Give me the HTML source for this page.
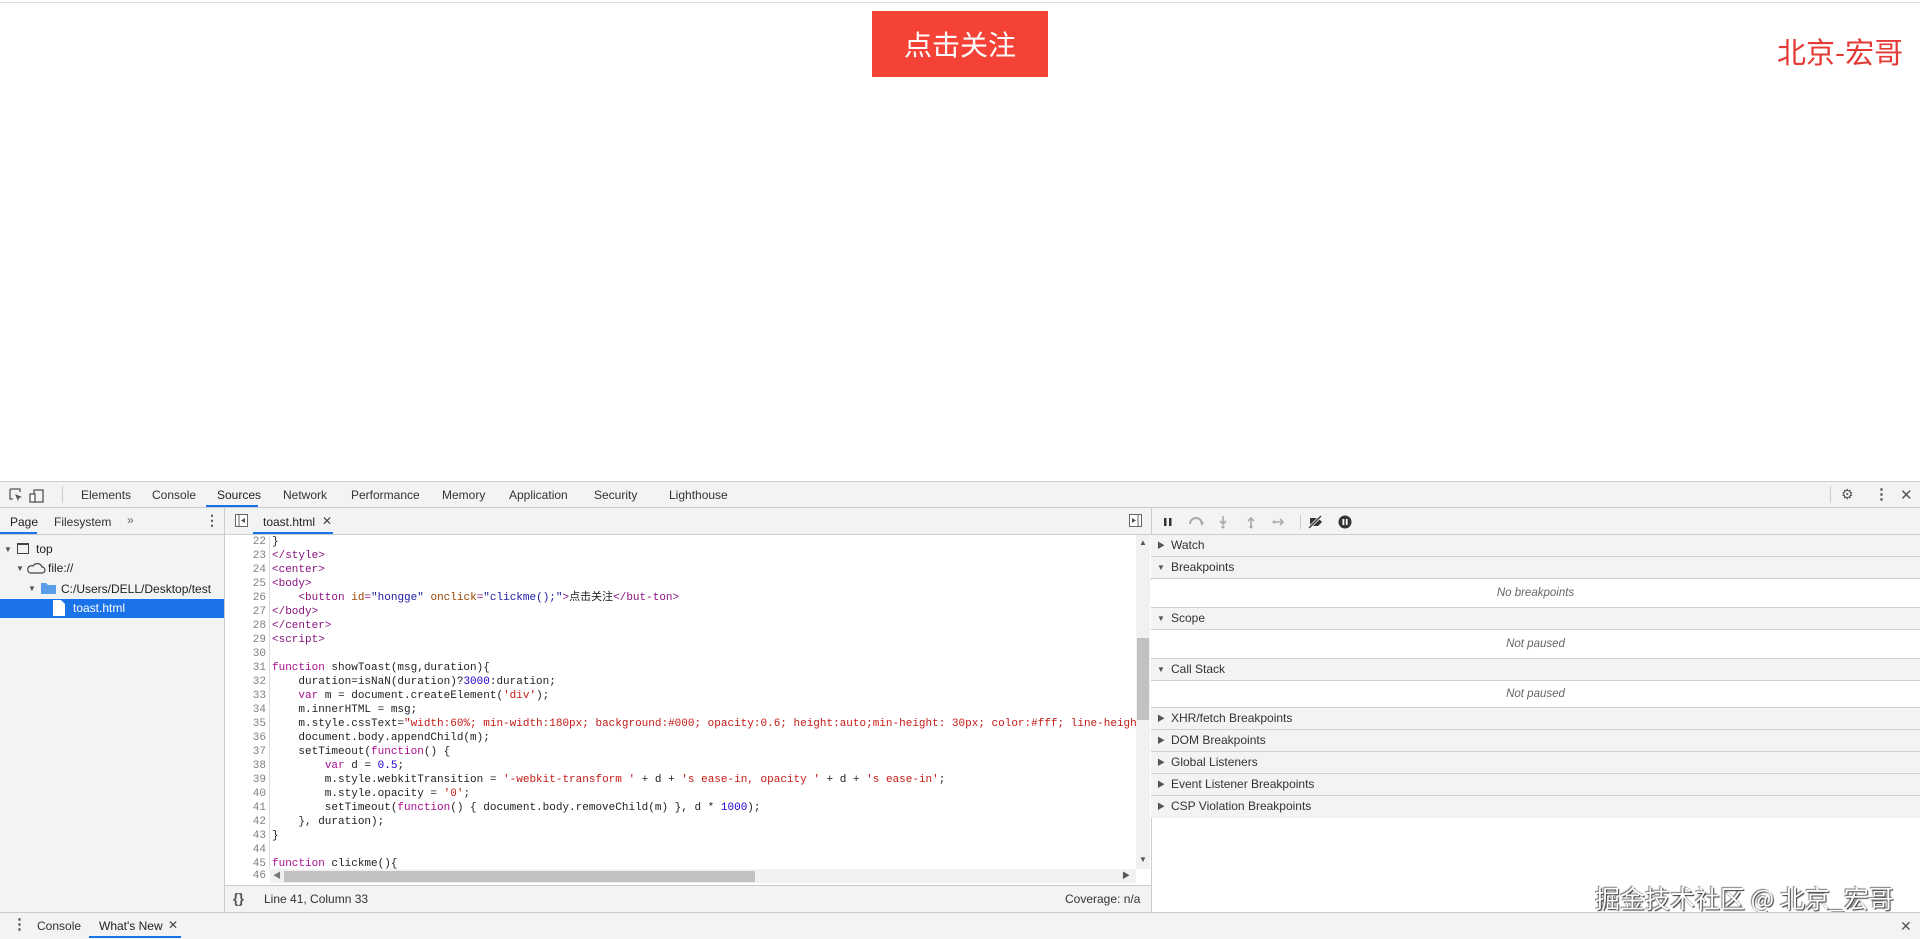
<!DOCTYPE html>
<html><head><meta charset="utf-8">
<style>
*{margin:0;padding:0;box-sizing:border-box}
body{width:1920px;height:939px;overflow:hidden;background:#fff;font-family:"Liberation Sans","Noto Sans CJK SC",sans-serif;position:relative;color:#333}
.a{position:absolute;white-space:nowrap}
.ui{font-size:12px;color:#333}
.mono{font-family:"Liberation Mono","Noto Sans CJK SC",monospace;font-size:11px}
.ln{position:absolute;left:224px;width:42px;text-align:right;color:#808080}
.cl{position:absolute;left:272px;color:#222;white-space:pre}
.k{color:#aa0d91}.t{color:#881280}.at{color:#994500}.av{color:#1a1aa6}.s{color:#c41a16}.n{color:#1c00cf}
.hdr{position:absolute;left:1151px;width:769px;height:22px;background:#f3f3f3;border-bottom:1px solid #d0d0d0;font-size:12px;color:#333;padding-left:20px;line-height:21px}
.tri{position:absolute;left:7px;top:0;font-size:8px;color:#555}
.body2{position:absolute;left:1151px;width:769px;background:#fff;border-bottom:1px solid #d0d0d0;text-align:center;font-style:italic;font-size:11.5px;color:#666}
</style></head><body>
<div class="a" style="left:0;top:2px;width:1920px;height:1px;background:#ddd"></div>
<div class="a" style="left:872px;top:11px;width:176px;height:66px;background:#f44336;color:#fff;font-size:28px;line-height:66px;text-align:center;font-family:'Noto Sans CJK SC',sans-serif">点击关注</div>
<div class="a" style="left:1777px;top:32px;color:#e53935;font-size:29px;font-family:'Noto Sans CJK SC',sans-serif;line-height:38px">北京-宏哥</div>

<div class="a" style="left:0;top:481px;width:1920px;height:27px;background:#f1f3f4;border-top:1px solid #ccc;border-bottom:1px solid #ccc"></div>
<svg class="a" style="left:8px;top:487px" width="40" height="16" viewBox="0 0 40 16"><path d="M2 2h10v3M2 2v10h3" fill="none" stroke="#555" stroke-width="1.3"/><path d="M7 7l7 3-3 1-1 3z" fill="#555"/><rect x="26" y="3" width="9" height="12" fill="none" stroke="#555" stroke-width="1.3"/><rect x="22" y="7" width="5" height="8" fill="#fff" stroke="#555" stroke-width="1.3"/></svg>
<div class="a" style="left:62px;top:486px;width:1px;height:17px;background:#ccc"></div>
<div class="a ui" style="left:81px;top:488px">Elements</div>
<div class="a ui" style="left:152px;top:488px">Console</div>
<div class="a ui" style="left:217px;top:488px;color:#222">Sources</div>
<div class="a" style="left:206px;top:505px;width:52px;height:2px;background:#1a73e8"></div>
<div class="a ui" style="left:283px;top:488px">Network</div>
<div class="a ui" style="left:351px;top:488px">Performance</div>
<div class="a ui" style="left:442px;top:488px">Memory</div>
<div class="a ui" style="left:509px;top:488px">Application</div>
<div class="a ui" style="left:594px;top:488px">Security</div>
<div class="a ui" style="left:669px;top:488px">Lighthouse</div>
<div class="a" style="left:1830px;top:486px;width:1px;height:17px;background:#ccc"></div>
<div class="a" style="left:1841px;top:486px;font-size:14px;color:#555">⚙</div>
<div class="a" style="left:1874px;top:485px;font-size:15px;color:#555;font-weight:bold">⋮</div>
<div class="a" style="left:1900px;top:486px;font-size:15px;color:#555">✕</div>

<div class="a" style="left:0;top:508px;width:1920px;height:27px;background:#f1f3f4;border-bottom:1px solid #ccc"></div>
<div class="a ui" style="left:10px;top:515px;color:#222">Page</div>
<div class="a" style="left:0;top:532px;width:37px;height:2px;background:#1a73e8"></div>
<div class="a ui" style="left:54px;top:515px">Filesystem</div>
<div class="a ui" style="left:127px;top:513px;color:#666">»</div>
<div class="a" style="left:205px;top:512px;font-size:14px;color:#555;font-weight:bold">⋮</div>
<div class="a" style="left:224px;top:508px;width:1px;height:431px;background:#ccc"></div>
<svg class="a" style="left:235px;top:514px" width="14" height="14"><rect x="0.5" y="0.5" width="12" height="12" fill="#fff" stroke="#666"/><path d="M4 1v11" stroke="#666"/><path d="M10 4l-4 2.5 4 2.5z" fill="#555"/></svg>
<div class="a ui" style="left:263px;top:515px;color:#222">toast.html</div>
<div class="a" style="left:322px;top:514px;font-size:12px;color:#444">✕</div>
<div class="a" style="left:253px;top:532px;width:80px;height:2px;background:#1a73e8"></div>
<svg class="a" style="left:1129px;top:514px" width="14" height="14"><rect x="0.5" y="0.5" width="12" height="12" fill="#fff" stroke="#666"/><path d="M9 1v11" stroke="#666"/><path d="M3 4l4 2.5-4 2.5z" fill="#555"/></svg>
<div class="a" style="left:1151px;top:508px;width:1px;height:431px;background:#ccc"></div>
<svg class="a" style="left:1160px;top:513px" width="200" height="18" viewBox="0 0 200 18">
<rect x="4" y="5" width="2.5" height="8" fill="#333"/><rect x="9" y="5" width="2.5" height="8" fill="#333"/>
<path d="M30 11a6 6 0 0 1 12 0" fill="none" stroke="#aaa" stroke-width="2"/><path d="M40 9l4 0-2 4z" fill="#aaa"/>
<path d="M63 3v8M60 8l3 3 3-3" fill="none" stroke="#aaa" stroke-width="1.6"/><circle cx="63" cy="14" r="1.5" fill="#aaa"/>
<path d="M91 13V5M88 8l3-3 3 3" fill="none" stroke="#aaa" stroke-width="1.6"/><circle cx="91" cy="14" r="1.5" fill="#aaa"/>
<path d="M113 9h10M120 6l3 3-3 3" fill="none" stroke="#aaa" stroke-width="1.6"/><circle cx="114" cy="9" r="1.5" fill="#aaa"/>
<rect x="140" y="2" width="1" height="14" fill="#ccc"/>
<path d="M150 5h8l4 4-4 4h-8z" fill="#333"/><path d="M149 15l12-12" stroke="#fff" stroke-width="3"/><path d="M149 15l12-12" stroke="#333" stroke-width="1.3"/>
<circle cx="185" cy="9" r="6.5" fill="#333"/><rect x="182.5" y="6" width="1.8" height="6" fill="#fff"/><rect x="185.8" y="6" width="1.8" height="6" fill="#fff"/>
</svg>

<div class="a" style="left:0;top:535px;width:224px;height:350px;background:#f1f3f4"></div>
<div class="a" style="left:0;top:885px;width:224px;height:27px;background:#f1f3f4"></div>
<div class="a" style="left:4px;top:545px;font-size:8px;color:#555">▼</div>
<div class="a" style="left:17px;top:543px;width:12px;height:11px;border:1.5px solid #444;border-top-width:2.5px"></div>
<div class="a ui" style="left:36px;top:542px;color:#222">top</div>
<div class="a" style="left:16px;top:564px;font-size:8px;color:#555">▼</div>
<svg class="a" style="left:26px;top:561px" width="20" height="14"><path d="M4 12h12a3 3 0 0 0 0-6 5 5 0 0 0-9-1 3.5 3.5 0 0 0-3 7z" fill="none" stroke="#444" stroke-width="1.2"/></svg>
<div class="a ui" style="left:48px;top:561px;color:#222">file://</div>
<div class="a" style="left:28px;top:584px;font-size:8px;color:#555">▼</div>
<svg class="a" style="left:41px;top:581px" width="16" height="14"><path d="M0 2h5l2 2h8v9H0z" fill="#5a9ee8"/></svg>
<div class="a ui" style="left:61px;top:582px;color:#222">C:/Users/DELL/Desktop/test</div>
<div class="a" style="left:0;top:599px;width:224px;height:19px;background:#1a73e8"></div>
<svg class="a" style="left:53px;top:600px" width="12" height="16"><path d="M0 0h8l4 4v12H0z" fill="#fff"/></svg>
<div class="a ui" style="left:73px;top:601px;color:#fff">toast.html</div>

<div class="a" style="left:269px;top:535px;width:1px;height:334px;background:#ddd"></div>
<div class="mono" style="position:absolute;left:0;top:535px;width:1136px;height:334px;overflow:hidden;line-height:14px">
<div class="ln" style="top:0">22</div><div class="cl" style="top:0">}</div>
<div class="ln" style="top:14px">23</div><div class="cl t" style="top:14px">&lt;/style&gt;</div>
<div class="ln" style="top:28px">24</div><div class="cl t" style="top:28px">&lt;center&gt;</div>
<div class="ln" style="top:42px">25</div><div class="cl t" style="top:42px">&lt;body&gt;</div>
<div class="ln" style="top:56px">26</div><div class="cl" style="top:56px">    <span class="t">&lt;button</span> <span class="at">id</span><span class="t">=</span><span class="av">"hongge"</span> <span class="at">onclick</span><span class="t">=</span><span class="av">"clickme();"</span><span class="t">&gt;</span>点击关注<span class="t">&lt;/but-ton&gt;</span></div>
<div class="ln" style="top:70px">27</div><div class="cl t" style="top:70px">&lt;/body&gt;</div>
<div class="ln" style="top:84px">28</div><div class="cl t" style="top:84px">&lt;/center&gt;</div>
<div class="ln" style="top:98px">29</div><div class="cl t" style="top:98px">&lt;script&gt;</div>
<div class="ln" style="top:112px">30</div>
<div class="ln" style="top:126px">31</div><div class="cl" style="top:126px"><span class="k">function</span> showToast(msg,duration){</div>
<div class="ln" style="top:140px">32</div><div class="cl" style="top:140px">    duration=isNaN(duration)?<span class="n">3000</span>:duration;</div>
<div class="ln" style="top:154px">33</div><div class="cl" style="top:154px">    <span class="k">var</span> m = document.createElement(<span class="s">'div'</span>);</div>
<div class="ln" style="top:168px">34</div><div class="cl" style="top:168px">    m.innerHTML = msg;</div>
<div class="ln" style="top:182px">35</div><div class="cl" style="top:182px">    m.style.cssText=<span class="s">"width:60%; min-width:180px; background:#000; opacity:0.6; height:auto;min-height: 30px; color:#fff; line-height: 30px;"</span></div>
<div class="ln" style="top:196px">36</div><div class="cl" style="top:196px">    document.body.appendChild(m);</div>
<div class="ln" style="top:210px">37</div><div class="cl" style="top:210px">    setTimeout(<span class="k">function</span>() {</div>
<div class="ln" style="top:224px">38</div><div class="cl" style="top:224px">        <span class="k">var</span> d = <span class="n">0.5</span>;</div>
<div class="ln" style="top:238px">39</div><div class="cl" style="top:238px">        m.style.webkitTransition = <span class="s">'-webkit-transform '</span> + d + <span class="s">'s ease-in, opacity '</span> + d + <span class="s">'s ease-in'</span>;</div>
<div class="ln" style="top:252px">40</div><div class="cl" style="top:252px">        m.style.opacity = <span class="s">'0'</span>;</div>
<div class="ln" style="top:266px">41</div><div class="cl" style="top:266px">        setTimeout(<span class="k">function</span>() { document.body.removeChild(m) }, d * <span class="n">1000</span>);</div>
<div class="ln" style="top:280px">42</div><div class="cl" style="top:280px">    }, duration);</div>
<div class="ln" style="top:294px">43</div><div class="cl" style="top:294px">}</div>
<div class="ln" style="top:308px">44</div>
<div class="ln" style="top:322px">45</div><div class="cl" style="top:322px"><span class="k">function</span> clickme(){</div>
</div>
<div class="ln mono" style="top:869px;line-height:14px">46</div>
<div class="a" style="left:270px;top:869px;width:866px;height:14px;background:#f1f1f1"></div>
<div class="a" style="left:273px;top:869px;font-size:8px;color:#777;line-height:14px">◀</div>
<div class="a" style="left:1122px;top:869px;font-size:8px;color:#555;line-height:14px">▶</div>
<div class="a" style="left:284px;top:871px;width:471px;height:11px;background:#c1c1c1"></div>
<div class="a" style="left:1136px;top:535px;width:14px;height:334px;background:#f1f1f1"></div>
<div class="a" style="left:1139px;top:538px;font-size:8px;color:#555">▲</div>
<div class="a" style="left:1139px;top:855px;font-size:8px;color:#555">▼</div>
<div class="a" style="left:1137px;top:638px;width:12px;height:82px;background:#c1c1c1"></div>
<div class="a" style="left:225px;top:885px;width:926px;height:27px;background:#f1f3f4;border-top:1px solid #ccc"></div>
<div class="a" style="left:233px;top:890px;font-size:14px;color:#555;font-weight:bold">{}</div>
<div class="a ui" style="left:264px;top:892px">Line 41, Column 33</div>
<div class="a ui" style="left:1065px;top:892px">Coverage: n/a</div>

<div class="hdr" style="top:535px"><span class="tri" style="left:6px">▶</span>Watch</div>
<div class="hdr" style="top:557px"><span class="tri" style="left:6px">▼</span>Breakpoints</div>
<div class="body2" style="top:580px;height:28px;line-height:27px">No breakpoints</div>
<div class="hdr" style="top:608px"><span class="tri" style="left:6px">▼</span>Scope</div>
<div class="body2" style="top:630px;height:29px;line-height:28px">Not paused</div>
<div class="hdr" style="top:659px"><span class="tri" style="left:6px">▼</span>Call Stack</div>
<div class="body2" style="top:681px;height:27px;line-height:26px">Not paused</div>
<div class="hdr" style="top:708px"><span class="tri" style="left:6px">▶</span>XHR/fetch Breakpoints</div>
<div class="hdr" style="top:730px"><span class="tri" style="left:6px">▶</span>DOM Breakpoints</div>
<div class="hdr" style="top:752px"><span class="tri" style="left:6px">▶</span>Global Listeners</div>
<div class="hdr" style="top:774px"><span class="tri" style="left:6px">▶</span>Event Listener Breakpoints</div>
<div class="hdr" style="top:796px;border-bottom:none"><span class="tri" style="left:6px">▶</span>CSP Violation Breakpoints</div>

<div class="a" style="left:1595px;top:881px;font-size:25px;color:#fff;font-family:'Noto Sans CJK SC',sans-serif;text-shadow:1px 1px 1px #333,-1px -1px 1px #777;line-height:34px">掘金技术社区 @ 北京_宏哥</div>

<div class="a" style="left:0;top:912px;width:1920px;height:27px;background:#f1f3f4;border-top:1px solid #ccc"></div>
<div class="a" style="left:12px;top:915px;font-size:15px;color:#555;font-weight:bold">⋮</div>
<div class="a ui" style="left:37px;top:919px">Console</div>
<div class="a ui" style="left:99px;top:919px;color:#222">What's New</div>
<div class="a" style="left:168px;top:918px;font-size:12px;color:#444">✕</div>
<div class="a" style="left:89px;top:936px;width:92px;height:2px;background:#1a73e8"></div>
<div class="a" style="left:1900px;top:918px;font-size:14px;color:#555">✕</div>
</body></html>
